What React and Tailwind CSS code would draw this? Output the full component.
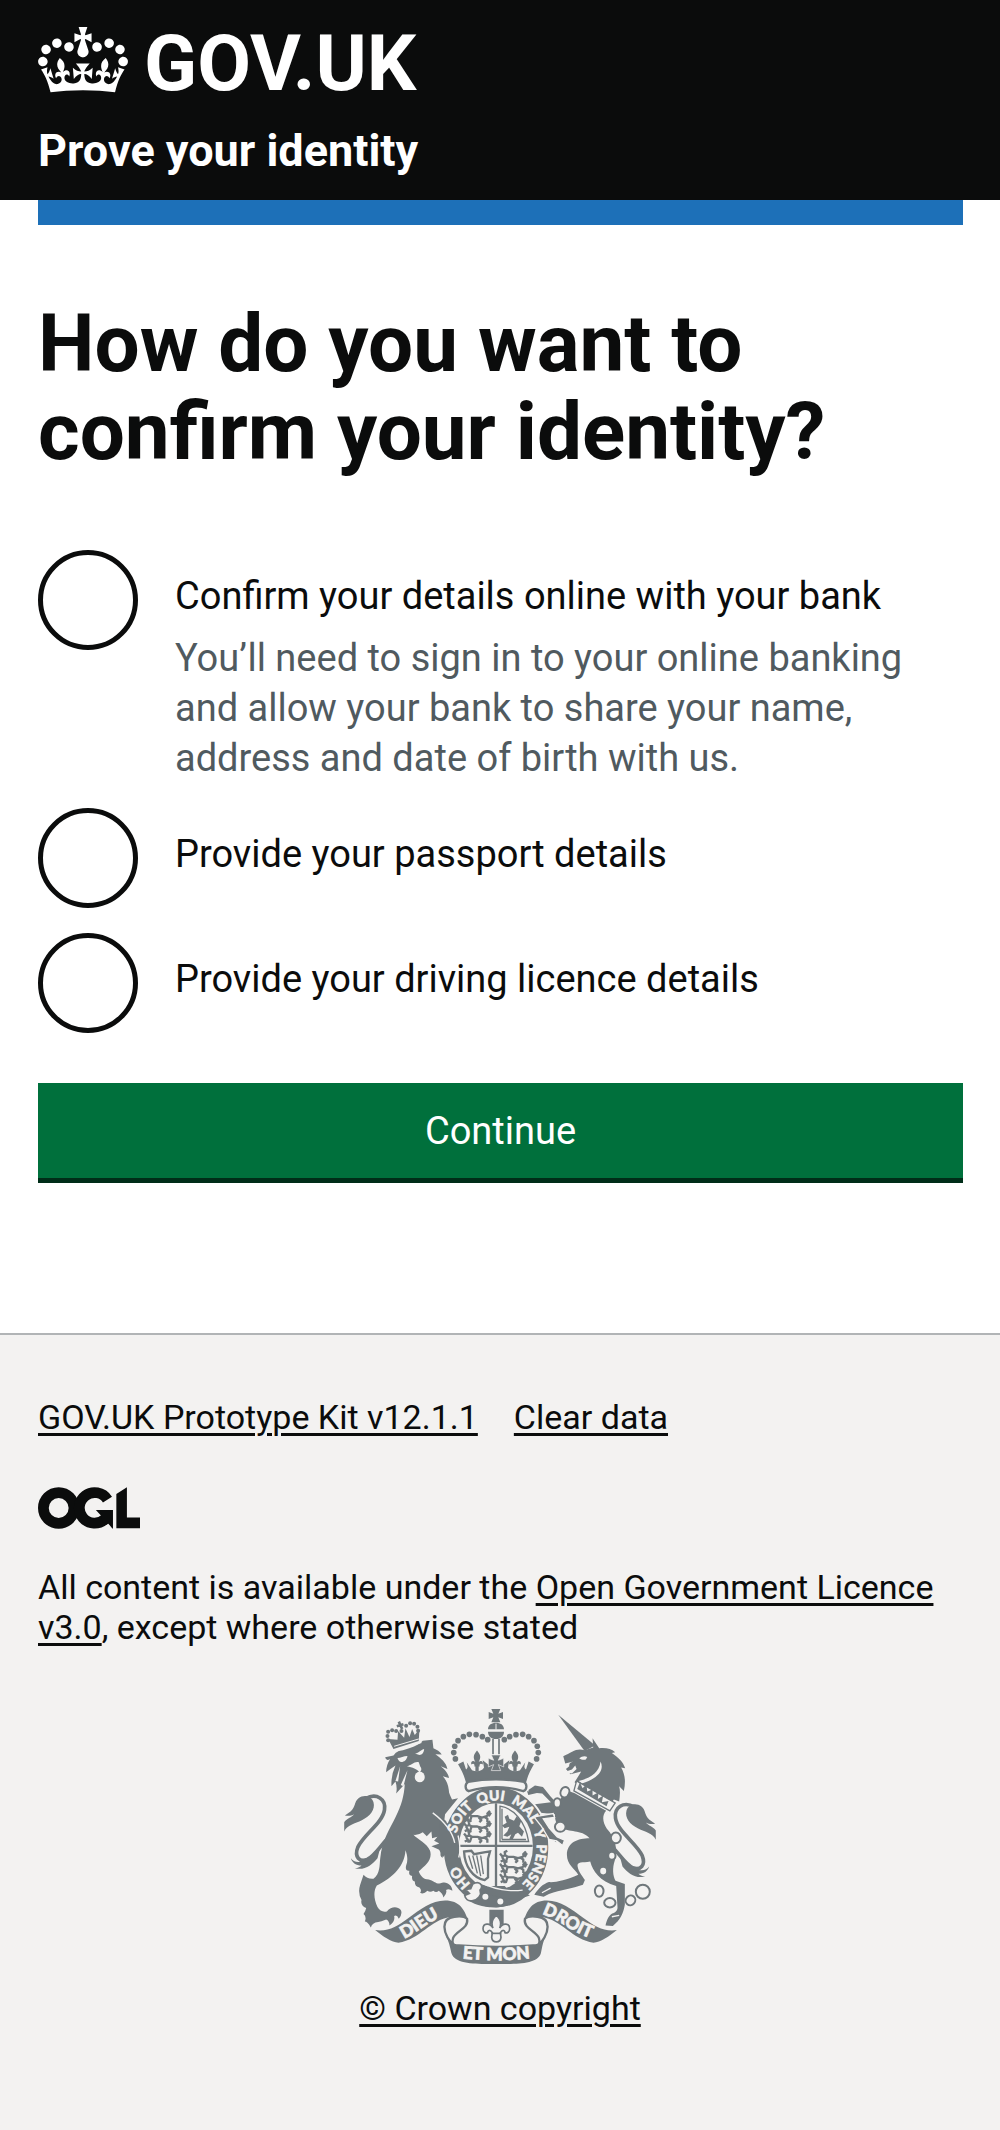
import React from "react";

const options = [
  {
    id: "bank",
    label: "Confirm your details online with your bank",
    hint: "You’ll need to sign in to your online banking and allow your bank to share your name, address and date of birth with us.",
  },
  { id: "passport", label: "Provide your passport details" },
  { id: "licence", label: "Provide your driving licence details" },
];

function Crown() {
  return (
    <svg viewBox="0 0 132 97" className="h-[66px] w-[90px] shrink-0" fill="currentColor" aria-hidden="true">
      <path
        fillRule="evenodd"
        d="M25 30.2c3.5 1.5 7.7-.2 9.1-3.7 1.5-3.6-.2-7.8-3.9-9.2-3.6-1.4-7.6.3-9.1 3.9-1.4 3.5.3 7.5 3.9 9zM9 39.5c3.6 1.5 7.8-.2 9.2-3.7 1.5-3.6-.2-7.8-3.9-9.1-3.6-1.5-7.6.2-9.1 3.8-1.4 3.5.3 7.5 3.8 9zM4.4 57.2c3.5 1.5 7.7-.2 9.1-3.8 1.5-3.6-.2-7.7-3.9-9.1-3.5-1.5-7.6.3-9.1 3.8-1.4 3.5.3 7.6 3.9 9.1zm38.3-21.4c3.5 1.5 7.7-.2 9.1-3.8 1.5-3.6-.2-7.7-3.9-9.1-3.6-1.5-7.6.3-9.1 3.8-1.3 3.6.4 7.7 3.9 9.1zm64.4-5.6c-3.6 1.5-7.8-.2-9.1-3.7-1.5-3.6.2-7.8 3.8-9.2 3.6-1.4 7.7.3 9.2 3.9 1.3 3.5-.4 7.5-3.9 9zm15.9 9.3c-3.6 1.5-7.7-.2-9.1-3.7-1.5-3.6.2-7.8 3.7-9.1 3.6-1.5 7.7.2 9.2 3.8 1.5 3.5-.3 7.5-3.8 9zm4.7 17.7c-3.6 1.5-7.8-.2-9.2-3.8-1.5-3.6.2-7.7 3.9-9.1 3.6-1.5 7.7.3 9.2 3.8 1.3 3.5-.4 7.6-3.9 9.1zM89.3 35.8c-3.6 1.5-7.8-.2-9.2-3.8-1.4-3.6.2-7.7 3.9-9.1 3.6-1.5 7.7.3 9.2 3.8 1.4 3.6-.3 7.7-3.9 9.1zM69.7 17.7l8.9 4.7V9.3l-8.9 2.8c-.2-.3-.5-.6-.9-.9L72.4 0H59.6l3.5 11.2c-.3.3-.6.5-.9.9l-8.8-2.8v13.1l8.8-4.7c.3.3.6.7.9.9l-5 15.4v.1c-.2.8-.4 1.6-.4 2.4 0 4.1 3.1 7.5 7 8.1h.2c.3 0 .7.1 1 .1.4 0 .7 0 1-.1h.2c4-.6 7.1-4.1 7.1-8.1 0-.8-.1-1.7-.4-2.4V34l-5.1-15.4c.4-.2.7-.6 1-.9zM66 92.8c16.9 0 32.8 1.1 47.1 3.2 4-16.9 8.9-26.7 14-33.5l-9.6-3.4c1 4.9 1.1 7.2 0 10.2-1.5-1.4-3-4.3-4.2-8.7L108.6 76c2.8-2 5-3.2 7.5-3.3-4.4 9.4-10 11.9-13.6 11.2-4.3-.8-6.3-4.6-5.6-7.9 1-4.7 5.7-5.9 8-.5 4.3-8.7-3-11.4-7.6-8.8 7.1-7.2 7.9-13.5 2.1-21.1-8 6.1-8.1 12.3-4.5 20.8-4.7-5.4-12.1-2.5-9.5 6.2 3.4-5.2 7.9-2 7.2 3.1-.6 4.3-6.4 7.8-13.5 7.2-10.3-.9-10.9-8-11.2-13.8 2.5-.5 7.1 1.8 11 7.3L80.2 60c-4.1 4.4-8 5.3-12.3 5.4 1.4-4.4 8-11.6 8-11.6H55.5s6.4 7.2 7.9 11.6c-4.2-.1-8-1-12.3-5.4l1.4 16.4c3.9-5.5 8.5-7.7 10.9-7.3-.3 5.8-.9 12.8-11.1 13.8-7.2.6-12.9-2.9-13.5-7.2-.7-5 3.8-8.3 7.1-3.1 2.7-8.7-4.6-11.6-9.4-6.2 3.7-8.5 3.6-14.7-4.6-20.8-5.8 7.6-5 13.9 2.2 21.1-4.7-2.6-11.9.1-7.7 8.8 2.3-5.5 7.1-4.2 8.1.5.7 3.3-1.3 7.1-5.7 7.9-3.5.7-9-1.8-13.5-11.2 2.5.1 4.7 1.3 7.5 3.3l-4.7-15.4c-1.2 4.4-2.7 7.2-4.3 8.7-1.1-3-.9-5.3 0-10.2l-9.5 3.4c5 6.9 9.9 16.7 14 33.5 14.8-2.1 30.8-3.2 47.7-3.2z"
      />
    </svg>
  );
}

function LicenceLogo() {
  return (
    <svg viewBox="0 0 483 196" className="h-[42px] w-[102px]" fill="currentColor" role="img" aria-label="Open Government Licence">
      <circle cx="98" cy="98" r="72.5" fill="none" stroke="currentColor" strokeWidth="51" />
      <path d="M329 58A72.5 72.5 0 1 0 318 150" fill="none" stroke="currentColor" strokeWidth="51" />
      <path d="M274 107h81v88h-3l-19-23-28-8-7-30z" />
      <path d="M371 32L421 0v143h62v51H371z" />
    </svg>
  );
}

const archDots = [[473, 152], [457, 143], [438, 137], [418, 136], [400, 143], [384, 155], [374, 172], [371, 191], [376, 210]];

function ArchAndFleur() {
  return (
    <g>
      {archDots.map(([x, y]) => (
        <circle key={x} cx={x} cy={y} r="8.5" />
      ))}
      <path d="M441 185c-12 14-12 22-5 34-7-6-15-2-12 8 6-5 11-1 9 6h16c-2-7 3-11 9-6 3-10-5-14-12-8 7-12 7-20-5-34z" />
      <path d="M436 224h10v24h-10z" />
      <path d="M384 226l16-8 8 24c8-6 4-14 2-22l16 24c12 6 30 4 36-8l-4-22 20 16 2-12h18v66c-34 0-58 2-88 8-4-24-14-46-26-66z" />
    </g>
  );
}

function Tail() {
  return (
    <g>
      <path d="M130 340c-6-20-30-24-45-12-14 12-8 26-24 40l-17 12c12 2 20 0 28-4-7 9-24 14-30 24v28c8-20 33-24 53-34 25-12 41-32 35-54z" />
      <path d="M106 329c34-18 62 2 57 34-6 40-62 74-80 112-12 30 6 46 28 37 28-14 44-52 84-84" fill="none" stroke="currentColor" strokeWidth="11" />
      <path d="M62 508c10 14 32 18 62-6l28-32-10 38c-16 20-40 38-68 30 10 0 16-4 20-8-16 0-28-8-32-22z" />
    </g>
  );
}

function RibbonEnd() {
  return (
    <g>
      <path d="M135 724c38 6 68-12 97-34 40-30 72-55 113-55 44 0 58 28 68 56-12-8-32-8-52-6-60 8-92 68-156 77-20 0-48-20-70-38z" />
      <path d="M411 690c6 30-34 36-42 58-4 12 2 22 8 26-20-14-34-40-34-60 0-18 12-28 30-30 14-2 30-2 38 6z" fill="#f3f2f1" stroke="currentColor" strokeWidth="7" />
    </g>
  );
}

function Lions() {
  return (
    <g fill="none" stroke="currentColor" strokeWidth="7" strokeLinejoin="round">
      {[0, 31, 62].map((y) => (
        <path
          key={y}
          transform={`translate(0 ${y})`}
          d="M402 372l6 8 10-2 8 4 16 0 14 4 14-4 8-10 6 4M408 382l6 10-10 4M424 384l-4 12h-8M446 386l8 8-6 6M462 384l10 6v10M418 378l-2-10 8-4M480 366l-8 8 8 8"
        />
      ))}
    </g>
  );
}

function RoyalArms() {
  return (
    <svg viewBox="42 60 936 766" className="h-[255px] w-[312px] overflow-visible text-[#6f777b]" fill="currentColor" role="img" aria-label="Royal coat of arms">
      <defs>
        <path id="arc-ho" d="M422 585A122 140 0 0 1 375 478" />
        <path id="arc-soit" d="M379 434A122 140 0 0 1 450 344" />
        <path id="arc-qui" d="M446 348A122 140 0 0 1 560 354" />
        <path id="arc-mal" d="M542 343A122 140 0 0 1 616 432" />
        <path id="arc-y" d="M610 426A122 140 0 0 1 620 480" />
        <path id="arc-pense" d="M620 467A122 140 0 0 1 541 608" />
        <path id="arc-dieu" d="M222 750C262 734 300 690 366 672" />
        <path id="arc-droit" d="M636 676C690 690 730 740 812 756" />
        <path id="arc-etmon" d="M376 807Q498 822 622 807" />
      </defs>

      <Tail />
      <g transform="matrix(-1 0 0 1 1020 25)">
        <Tail />
      </g>

      {/* Lion */}
      <path d="M165 205L190 200Q196 190 206 186C240 180 270 165 278 155L307 152L310 178C320 182 330 188 335 197L316 196C332 208 348 220 352 240L332 232C344 242 354 252 357 267L338 262C348 272 354 286 356 302C356 315 362 322 366 332L384 328L345 376L343 392C360 408 376 425 382 445C388 465 388 485 386 500L378 514Q372 506 376 496Q362 498 362 512Q350 506 354 494Q342 498 340 508Q326 504 334 486L304 472L328 464L312 456L322 444L306 448L304 428L290 442L278 430Q264 440 250 438C262 452 290 462 300 486C308 515 285 530 266 548C272 562 280 572 296 572C312 576 322 590 336 582C352 578 366 590 367 606Q356 598 348 604Q352 614 340 626Q338 614 326 606Q318 614 310 606Q300 612 292 606Q280 618 270 612Q276 604 268 596Q254 594 254 578Q244 576 246 562Q234 560 238 546Q224 548 228 530C234 515 232 500 226 484C224 530 190 565 140 590C130 605 130 630 142 655Q152 672 170 668C184 652 202 652 212 664Q218 676 206 690Q200 676 192 682Q196 698 178 710Q178 696 168 692Q152 698 144 700Q126 702 122 716Q112 698 104 698Q110 684 100 676Q106 668 108 658Q90 650 94 634Q82 612 90 588L100 558Q112 572 130 570C150 555 148 530 150 510C156 450 180 420 196 385C214 350 222 320 224 285L198 314Q202 296 196 278L184 292Q182 260 196 230Q176 244 168 250Q168 228 180 210Q168 218 165 205Z" />
      <g fill="#f3f2f1">
        <path d="M202 207c10 0 18-6 30-6-2 12-10 18-18 18-6 0-10-6-12-12zM254 194c10 0 16-10 28-14 0 10-6 18-14 18zM230 232c12-2 24-16 36-12l4 12c6 8 4 14-2 18-8-10-20-14-38-18z" />
        <ellipse cx="269" cy="264" rx="15" ry="16" />
        <path d="M196 276l14-44-6 46zM212 288l20-44-12 48z" />
      </g>

      {/* Lion's crown */}
      <path d="M174 150l16 30 76-24 2-36-14 18-8-18-8 24-12-26-4 28-18-20-2 26z" />
      <path d="M192 172l74-22" stroke="#f3f2f1" strokeWidth="3" />
      <path d="M190 188l84-28" stroke="#f3f2f1" strokeWidth="4" />
      <path d="M206 98l10 22M200 112l20-6" stroke="currentColor" strokeWidth="8" />
      {[[174, 154], [172, 141], [174, 128], [186, 124], [198, 126], [228, 110], [240, 103], [252, 104], [262, 113], [264, 125], [214, 126]].map(([x, y]) => (
        <circle key={`${x}-${y}`} cx={x} cy={y} r="6" />
      ))}

      {/* Unicorn */}
      <path d="M685 77L796 170L764 186Z" />
      <path d="M764 184L790 176L788 148L808 178C830 176 844 180 856 190L846 192C866 206 880 218 886 238L874 236C886 258 888 278 882 306L868 292C872 308 870 322 868 338L852 332L838 352L734 280L754 248L722 256L708 240L718 232Q716 222 730 218L706 224L700 202C726 190 740 176 764 184Z" />
      <path d="M748 208c8-6 16-8 24-4l-4 8c-8 2-14 0-20-4zM746 276c30-6 62-22 66-58 12 24-6 50-56 66zM702 250l24-8 10-12 4 10-14 14z" fill="#f3f2f1" />
      <path d="M740 276l116 66-16 24-108-60z" fill="#f3f2f1" stroke="currentColor" strokeWidth="4" />
      <path d="M742 300l8-20 8 18 12-12 2 22 16-6 0 18 18-10-2 20 16-10-4 20 20-4-6 16z" />
      <path d="M733 312l96 54c-12 12-12 32 2 54 26 28 34 64 24 94-8 24-6 46 2 62l28 10v62c-4 20-8 34-22 50l-14 14-22-2c4-16 8-28 20-36 8-2 16-8 16-18l-4-64c-50-16-70-44-78-74-24 4-40 0-38 14 4 20 12 24 22 42l-6 14c-32 12-66 14-102 28l-16 8-28-6c14-20 26-32 44-38 18 2 52-6 88-22-10-18-34-30-34-60 0-38 34-50 68-50-26-28-60-14-90-34-12-10-14-24-14-38l-58-6 8 24 20 30c18 8 30 18 34 36l-20-14-24-8-32-54-12-28 24-10 48-6-26-26-16-2-26 6-4-12 24-16 24 4c14 18 30 38 46 52 4-18 14-28 30-40z" />
      <path d="M636 612l26-14M846 684l22-4" stroke="#f3f2f1" strokeWidth="4" />
      <g fill="#f3f2f1" stroke="currentColor" strokeWidth="6">
        <ellipse cx="705" cy="310" rx="13" ry="16" transform="rotate(20 705 310)" />
        <ellipse cx="682" cy="342" rx="11" ry="14" />
        <ellipse cx="691" cy="414" rx="16" ry="15" />
        <ellipse cx="858" cy="447" rx="15" ry="16" />
        <ellipse cx="846" cy="501" rx="11" ry="12" />
        <ellipse cx="820" cy="547" rx="12" ry="13" />
        <ellipse cx="808" cy="607" rx="13" ry="17" />
        <ellipse cx="840" cy="642" rx="17" ry="14" />
        <ellipse cx="902" cy="635" rx="14" ry="15" transform="rotate(40 902 635)" />
        <circle cx="939" cy="609" r="21" />
      </g>

      {/* Garter and shield */}
      <ellipse cx="498" cy="475" rx="160" ry="184" stroke="#f3f2f1" strokeWidth="6" />
      <ellipse cx="498" cy="473" rx="111" ry="130" fill="#f3f2f1" />
      <path d="M498 343v252M388 471h220" stroke="currentColor" strokeWidth="7" />
      <Lions />
      <g transform="translate(108 122)">
        <Lions />
      </g>
      <path d="M510 458V352c40 6 76 44 86 106zM516 452h72M516 360v92" fill="none" stroke="currentColor" strokeWidth="4" />
      <path d="M524 384l10-6 4 12 14 6 8-14 14 14-6 16 14 16-6 16-12-12-8 4-8 16-10-2 6-14-12 8-12-4 12-12 6-14-14 4-8-8 14-8z" />
      <path d="M402 488l22-2 8 10 34-6 14-2-6 22v56l-10 8c-36-6-60-42-62-86z" fill="none" stroke="currentColor" strokeWidth="7" />
      <path d="M416 500l12 40M428 500l14 54M440 500l12 62M452 500l8 56" stroke="currentColor" strokeWidth="4" />
      <path d="M472 592h52l10 10c-14 10-44 8-62-10z" />

      {/* Buckle and strap end */}
      <path d="M410 590c50 30 114 46 172 34-40 38-128 46-178 2z" />
      <path d="M448 584c48 18 90 26 126 22l26 14-24 8c-50 4-96-8-132-26z" />
      <path d="M446 578c40 22 84 32 132 26M406 632c20 18 44 28 70 32" fill="none" stroke="#f3f2f1" strokeWidth="4" />
      <path d="M428 586c20-12 34 4 22 18 6 14-6 30-24 32-12 2-20-6-22-16l14-6-12-12 16-2z" fill="#f3f2f1" stroke="currentColor" strokeWidth="5" />
      <circle cx="466" cy="624" r="9" fill="#f3f2f1" />
      <circle cx="511" cy="638" r="9" fill="#f3f2f1" />

      {/* Lion's paw and unicorn's hoof over the garter */}
      <path d="M330 384C364 410 382 436 386 470Q388 490 384 502L376 512Q372 504 374 496Q362 498 360 510Q350 504 352 494Q342 498 338 506L326 480Z" />
      <path d="M308 372C340 396 366 424 374 462M384 440Q394 480 386 506" fill="none" stroke="#f3f2f1" strokeWidth="4" />
      <path d="M612 384l58-10 4 12-34 4 18 28 24 26 22 10-6 16-18-14-22-4-24-40z" stroke="#f3f2f1" strokeWidth="4" />

      <g fill="#f3f2f1" stroke="#f3f2f1" strokeWidth="1.5" className="font-['Lato'] text-[42px] font-black">
        <text><textPath href="#arc-ho">HO</textPath></text>
        <text><textPath href="#arc-soit">SOIT</textPath></text>
        <text><textPath href="#arc-qui">QUI</textPath></text>
        <text><textPath href="#arc-mal">MAL</textPath></text>
        <text><textPath href="#arc-y">Y</textPath></text>
        <text><textPath href="#arc-pense">PENSE</textPath></text>
      </g>

      {/* Imperial crown */}
      <path d="M404 276Q498 250 592 276l4 32Q498 282 400 308z" fill="#f3f2f1" />
      <ArchAndFleur />
      <g transform="matrix(-1 0 0 1 996 0)">
        <ArchAndFleur />
      </g>
      <path d="M484 60h27l-6 14 14-5v21l-14-5 6 15h-27l6-15-14 5V69l14 5z" />
      <path d="M474 121c0-26 48-26 48 0zM474 128h48c0 12-8 22-24 22s-24-10-24-22z" />
      <path d="M498 104v18" stroke="#f3f2f1" strokeWidth="3" />
      <path d="M489 150v46M507 150v46" stroke="currentColor" strokeWidth="5" />
      <path d="M484 198h28l-7 16 16-6v26l-16-7 7 18h-28l7-18-16 7v-26l16 6z" stroke="#f3f2f1" strokeWidth="2" />
      <path d="M414 279Q498 264 582 279c10 6 10 24-2 28Q498 282 416 307c-12-4-12-22-2-28z" fill="#f3f2f1" stroke="currentColor" strokeWidth="7" />

      {/* Ribbon */}
      <RibbonEnd />
      <g transform="matrix(-1 0 0 1 996 0)">
        <RibbonEnd />
      </g>
      <path d="M345 735c10 20 22 32 42 32q110 8 222 0c20 0 32-12 42-32-12 20-14 40-18 58-10 36-80 33-135 33s-124 3-134-33c-4-18-8-38-19-58z" />
      <path d="M478 663h43v44h-43z" />
      <path d="M499 680c-14 12-16 24-10 38-10-18-30-14-30 2 0 10 8 14 14 12 0-8 8-10 14 0l-2 14c2 18 26 18 28 0l-2-14c6-10 14-8 14 0 6 2 14-2 14-12 0-16-20-20-30-2 6-14 4-26-10-38z" fill="#f3f2f1" stroke="currentColor" strokeWidth="5" />
      <path d="M484 734h30" stroke="currentColor" strokeWidth="5" />
      <g fill="#f3f2f1" stroke="#f3f2f1" strokeWidth="2" className="font-['Lato'] text-[52px] font-black">
        <text><textPath href="#arc-dieu">DIEU</textPath></text>
        <text><textPath href="#arc-droit">DROIT</textPath></text>
        <text textAnchor="middle"><textPath href="#arc-etmon" startOffset="50%">ET MON</textPath></text>
      </g>
    </svg>
  );
}

const linkStyle = "underline decoration-3 underline-offset-4";

export default function App() {
  return (
    <div className="min-h-screen bg-[#f3f2f1] font-['Roboto',sans-serif] text-[#0b0c0c]">
      <header className="bg-[#0b0c0c] px-[38px] pt-[27px] pb-6 text-white">
        <a href="#home" className="flex w-fit items-start gap-4">
          <Crown />
          <span className="pt-1 text-[78px] leading-[66px] font-bold">GOV.UK</span>
        </a>
        <a href="#service" className="mt-[29px] block w-fit text-[45px] leading-[50px] font-bold">
          Prove your identity
        </a>
      </header>

      <div className="border-b-2 border-[#b1b4b6] bg-white pr-[37px] pb-[155px] pl-[38px]">
        <div className="h-[25px] bg-[#1d70b8]" />
        <main className="pt-[75px]">
          <form onSubmit={(e) => e.preventDefault()}>
            <fieldset>
              <legend className="mb-[74px]">
                <h1 className="max-w-[860px] text-[80px] leading-[88px] font-bold">How do you want to confirm your identity?</h1>
              </legend>
              <div className="flex flex-col gap-[25px]">
                {options.map(({ id, label, hint }) => (
                  <div key={id} className="flex items-start gap-[37px]">
                    <input
                      type="radio"
                      name="method"
                      id={id}
                      aria-describedby={hint ? `${id}-hint` : undefined}
                      className="size-[100px] shrink-0 appearance-none rounded-full border-5 border-[#0b0c0c] bg-white checked:bg-[#0b0c0c] checked:shadow-[inset_0_0_0_20px_white]"
                    />
                    <div className="pt-[21px] text-[38px] leading-[50px]">
                      <label htmlFor={id} className="block">{label}</label>
                      {hint && (
                        <p id={`${id}-hint`} className="mt-3 text-[#505a5f]">{hint}</p>
                      )}
                    </div>
                  </div>
                ))}
              </div>
            </fieldset>
            <button type="submit" className="mt-[50px] block h-[95px] w-full bg-[#00703c] text-[38px] leading-[50px] text-white shadow-[0_5px_0_#002d18]">
              Continue
            </button>
          </form>
        </main>
      </div>

      <footer className="px-[38px] pt-[62px] pb-[95px] text-[34px] leading-10">
        <nav className="flex flex-wrap gap-x-9">
          <a href="#kit" className={linkStyle}>GOV.UK Prototype Kit v12.1.1</a>
          <a href="#clear" className={linkStyle}>Clear data</a>
        </nav>
        <div className="mt-[50px]">
          <LicenceLogo />
        </div>
        <p className="mt-[38px]">
          All content is available under the{" "}
          <a href="#licence-text" className={linkStyle}>Open Government Licence v3.0</a>, except where otherwise stated
        </p>
        <a href="#copyright" className="mx-auto mt-[62px] flex w-fit flex-col items-center gap-6">
          <RoyalArms />
          <span className={linkStyle}>© Crown copyright</span>
        </a>
      </footer>
    </div>
  );
}
